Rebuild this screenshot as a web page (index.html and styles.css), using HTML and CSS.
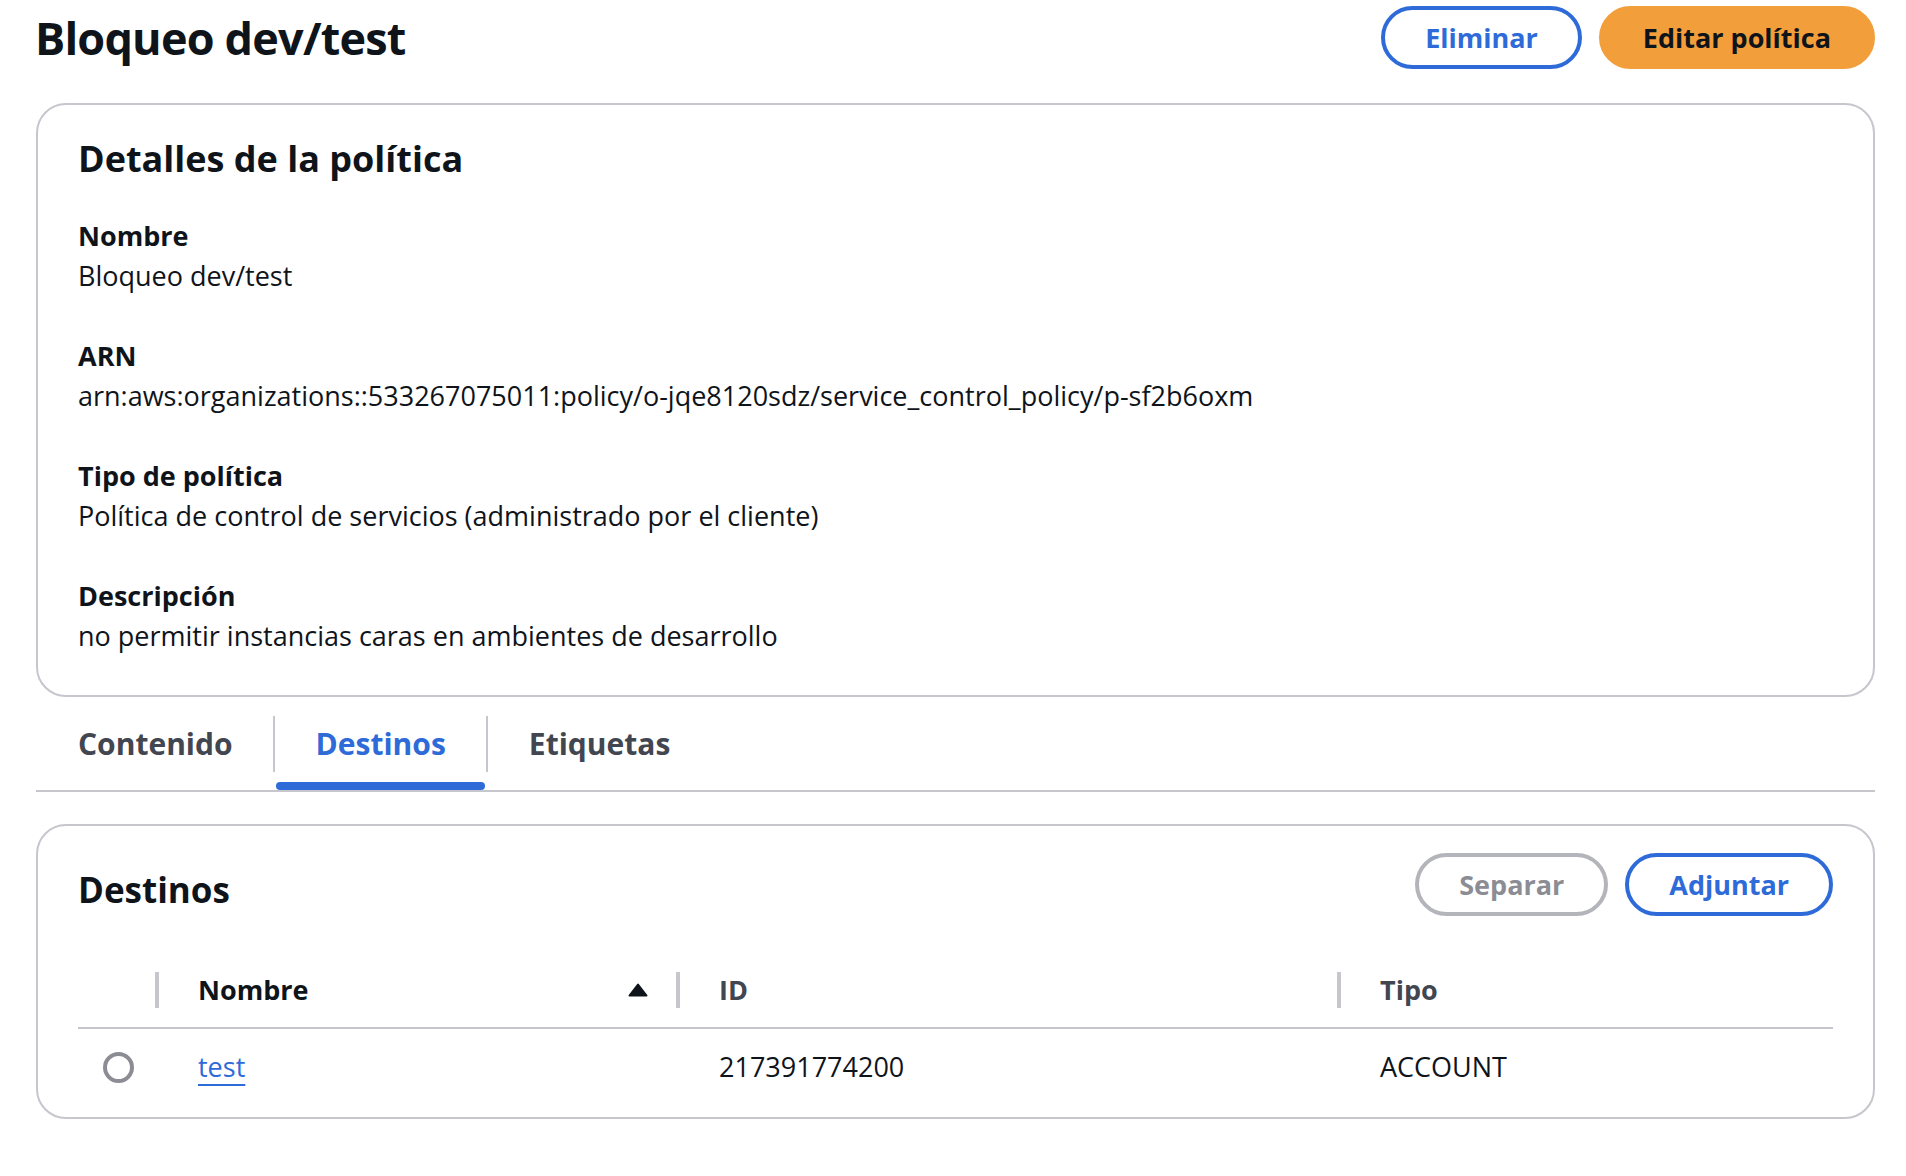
FILE: index.html
```html
<!DOCTYPE html>
<html lang="es">
<head>
  <meta charset="UTF-8">
  <meta name="viewport" content="width=device-width, initial-scale=1">
  <link rel="stylesheet" href="styles.css">
  <title>Bloqueo dev/test</title>
</head>
<body>
<div class="page">
  <div class="page-header">
    <h1 class="page-title">Bloqueo dev/test</h1>
    <div class="actions">
      <button class="btn btn-normal">Eliminar</button>
      <button class="btn btn-primary">Editar política</button>
    </div>
  </div>

  <div class="card details">
    <h2 class="card-title">Detalles de la política</h2>
    <dl class="fields">
      <div class="field">
        <dt>Nombre</dt>
        <dd>Bloqueo dev/test</dd>
      </div>
      <div class="field">
        <dt>ARN</dt>
        <dd>arn:aws:organizations::533267075011:policy/o-jqe8120sdz/service_control_policy/p-sf2b6oxm</dd>
      </div>
      <div class="field">
        <dt>Tipo de política</dt>
        <dd>Política de control de servicios (administrado por el cliente)</dd>
      </div>
      <div class="field">
        <dt>Descripción</dt>
        <dd>no permitir instancias caras en ambientes de desarrollo</dd>
      </div>
    </dl>
  </div>

  <div class="tabs">
    <div class="tab">
      <span class="tab-label">Contenido</span>
      <span class="tab-bar"></span>
    </div>
    <div class="tab active">
      <span class="tab-label">Destinos</span>
      <span class="tab-bar"></span>
    </div>
    <div class="tab">
      <span class="tab-label">Etiquetas</span>
      <span class="tab-bar"></span>
    </div>
  </div>

  <div class="card targets">
    <div class="targets-header">
      <h2 class="targets-title">Destinos</h2>
      <div class="actions">
        <button class="btn btn-disabled" disabled>Separar</button>
        <button class="btn btn-normal">Adjuntar</button>
      </div>
    </div>

    <div class="table">
      <div class="th"></div>
      <div class="th sorted">
        <div class="th-inner">
          <span>Nombre</span>
          <svg class="sort-icon" width="20" height="14" viewBox="0 0 20 14">
            <polygon points="10,1.5 18.5,12.5 1.5,12.5" fill="#0f141a" stroke="#0f141a" stroke-width="2" stroke-linejoin="round"/>
          </svg>
        </div>
      </div>
      <div class="th">
        <div class="th-inner"><span>ID</span></div>
      </div>
      <div class="th">
        <div class="th-inner"><span>Tipo</span></div>
      </div>

      <div class="td td-radio"><span class="radio"></span></div>
      <div class="td"><a class="link" href="#">test</a></div>
      <div class="td">217391774200</div>
      <div class="td">ACCOUNT</div>
    </div>
  </div>
</div>
</body>
</html>
```

FILE: styles.css
```css
* {
  margin: 0;
  padding: 0;
  box-sizing: border-box;
}
body {
  background: #ffffff;
  color: #0f141a;
  font-family: "Open Sans", "Noto Sans", Arial, sans-serif;
  font-size: 27px;
}
.page {
  padding: 6px 31px 0 36px;
}

/* header */
.page-header {
  display: flex;
  justify-content: space-between;
  align-items: flex-start;
}
.page-title {
  font-size: 45px;
  font-weight: 700;
  line-height: 64px;
  margin-left: -1px;
  letter-spacing: -0.8px;
}
.actions {
  display: flex;
  gap: 17px;
}
.btn {
  font-family: inherit;
  font-size: 27px;
  font-weight: 700;
  height: 63px;
  line-height: 55px;
  padding: 0 40px;
  border-radius: 32px;
  border: 4px solid #2e6bd8;
  background: #ffffff;
  color: #2e6bd8;
  cursor: pointer;
}
.btn-primary {
  background: #f29e3a;
  border-color: #f29e3a;
  color: #0f141a;
}
.btn-disabled {
  border-color: #b4b4bb;
  color: #8c8c94;
  cursor: default;
}

/* cards */
.card {
  border: 2px solid #c6c6cd;
  border-radius: 30px;
  background: #ffffff;
}
.details {
  margin-top: 33px;
  padding: 32px 40px 39px;
}
.card-title {
  font-size: 36px;
  font-weight: 700;
  line-height: 44px;
  margin-bottom: 35px;
}
.fields {
  display: flex;
  flex-direction: column;
  gap: 40px;
}
.field dt {
  font-weight: 700;
  line-height: 40px;
}
.field dd {
  line-height: 40px;
}

/* tabs */
.tabs {
  display: flex;
  border-bottom: 2px solid #c6c6cd;
}
.tab {
  display: flex;
  flex-direction: column;
  padding-top: 19px;
}
.tab-label {
  display: block;
  font-size: 30px;
  font-weight: 700;
  line-height: 56px;
  padding: 0 40px 0 42px;
  color: #424650;
}
.tab + .tab .tab-label {
  border-left: 2px solid #c6c6cd;
  padding-left: 41px;
}
.tab-bar {
  display: block;
  height: 8px;
  margin: 10px 1px 0 3px;
  border-radius: 4px;
}
.tab.active .tab-label {
  color: #2e6bd8;
}
.tab.active .tab-bar {
  background: #2e6bd8;
}

/* targets */
.targets {
  margin-top: 32px;
  padding: 27px 40px 0;
}
.targets-header {
  display: flex;
  justify-content: space-between;
  align-items: flex-start;
}
.targets-title {
  font-size: 35px;
  font-weight: 700;
  line-height: 63px;
  padding-top: 5px;
}
.table {
  display: grid;
  grid-template-columns: 77px 521px 661px 1fr;
  margin-top: 32px;
}
.th {
  padding: 19px 0;
  border-bottom: 2px solid #c6c6cd;
  font-weight: 700;
  color: #424650;
}
.th.sorted {
  color: #0f141a;
}
.th-inner {
  display: flex;
  justify-content: space-between;
  align-items: center;
  height: 36px;
  line-height: 36px;
  padding: 0 28px 0 39px;
  border-left: 4px solid #c6c6cd;
}
.sort-icon {
  display: block;
}
.td {
  padding: 18px 0 30px 43px;
  line-height: 40px;
}
.td-radio {
  display: flex;
  align-items: center;
  padding-left: 25px;
  height: 88px;
}
.radio {
  display: block;
  width: 31px;
  height: 31px;
  margin-top: 1px;
  border: 4px solid #8c8c94;
  border-radius: 50%;
}
.link {
  color: #2e6bd8;
  text-decoration: underline;
  text-decoration-thickness: 2px;
  text-underline-offset: 7px;
}
```
